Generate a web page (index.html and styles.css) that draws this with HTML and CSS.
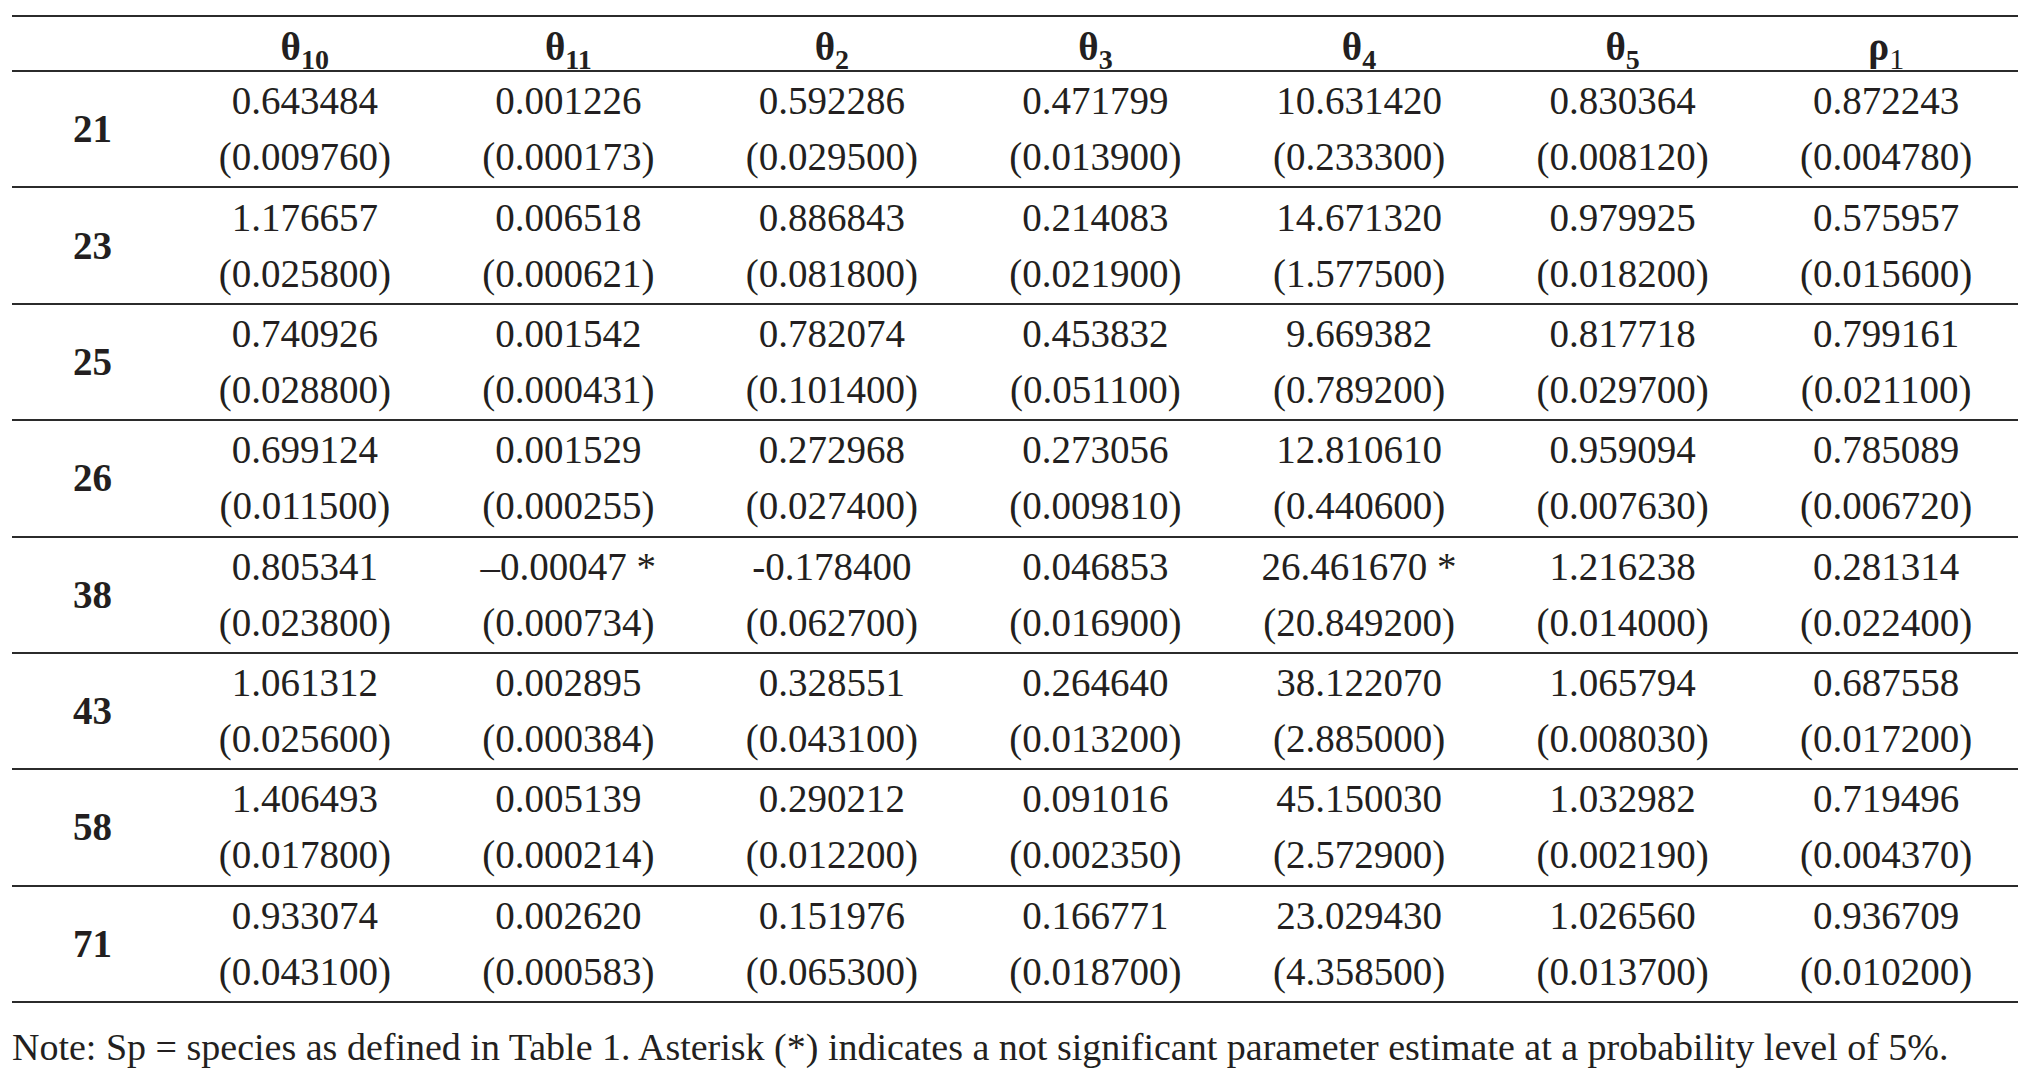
FILE: index.html
```html
<!DOCTYPE html>
<html lang="en">
<head>
<meta charset="utf-8">
<title>Parameter estimates</title>
<link rel="stylesheet" href="styles.css">
</head>
<body>
<div class="page">
  <table class="params">
    <colgroup>
      <col class="c-sp">
      <col class="c-val"><col class="c-val"><col class="c-val"><col class="c-val">
      <col class="c-val"><col class="c-val"><col class="c-val">
    </colgroup>
    <thead>
      <tr>
        <th></th>
        <th>θ<sub>10</sub></th>
        <th>θ<sub>11</sub></th>
        <th>θ<sub>2</sub></th>
        <th>θ<sub>3</sub></th>
        <th>θ<sub>4</sub></th>
        <th>θ<sub>5</sub></th>
        <th>ρ<sub class="rho">1</sub></th>
      </tr>
    </thead>
    <tbody>
      <tr>
        <th class="sp">21</th>
        <td>0.643484<br>(0.009760)</td>
        <td>0.001226<br>(0.000173)</td>
        <td>0.592286<br>(0.029500)</td>
        <td>0.471799<br>(0.013900)</td>
        <td>10.631420<br>(0.233300)</td>
        <td>0.830364<br>(0.008120)</td>
        <td>0.872243<br>(0.004780)</td>
      </tr>
      <tr>
        <th class="sp">23</th>
        <td>1.176657<br>(0.025800)</td>
        <td>0.006518<br>(0.000621)</td>
        <td>0.886843<br>(0.081800)</td>
        <td>0.214083<br>(0.021900)</td>
        <td>14.671320<br>(1.577500)</td>
        <td>0.979925<br>(0.018200)</td>
        <td>0.575957<br>(0.015600)</td>
      </tr>
      <tr>
        <th class="sp">25</th>
        <td>0.740926<br>(0.028800)</td>
        <td>0.001542<br>(0.000431)</td>
        <td>0.782074<br>(0.101400)</td>
        <td>0.453832<br>(0.051100)</td>
        <td>9.669382<br>(0.789200)</td>
        <td>0.817718<br>(0.029700)</td>
        <td>0.799161<br>(0.021100)</td>
      </tr>
      <tr>
        <th class="sp">26</th>
        <td>0.699124<br>(0.011500)</td>
        <td>0.001529<br>(0.000255)</td>
        <td>0.272968<br>(0.027400)</td>
        <td>0.273056<br>(0.009810)</td>
        <td>12.810610<br>(0.440600)</td>
        <td>0.959094<br>(0.007630)</td>
        <td>0.785089<br>(0.006720)</td>
      </tr>
      <tr>
        <th class="sp">38</th>
        <td>0.805341<br>(0.023800)</td>
        <td>–0.00047 *<br>(0.000734)</td>
        <td>-0.178400<br>(0.062700)</td>
        <td>0.046853<br>(0.016900)</td>
        <td>26.461670 *<br>(20.849200)</td>
        <td>1.216238<br>(0.014000)</td>
        <td>0.281314<br>(0.022400)</td>
      </tr>
      <tr>
        <th class="sp">43</th>
        <td>1.061312<br>(0.025600)</td>
        <td>0.002895<br>(0.000384)</td>
        <td>0.328551<br>(0.043100)</td>
        <td>0.264640<br>(0.013200)</td>
        <td>38.122070<br>(2.885000)</td>
        <td>1.065794<br>(0.008030)</td>
        <td>0.687558<br>(0.017200)</td>
      </tr>
      <tr>
        <th class="sp">58</th>
        <td>1.406493<br>(0.017800)</td>
        <td>0.005139<br>(0.000214)</td>
        <td>0.290212<br>(0.012200)</td>
        <td>0.091016<br>(0.002350)</td>
        <td>45.150030<br>(2.572900)</td>
        <td>1.032982<br>(0.002190)</td>
        <td>0.719496<br>(0.004370)</td>
      </tr>
      <tr>
        <th class="sp">71</th>
        <td>0.933074<br>(0.043100)</td>
        <td>0.002620<br>(0.000583)</td>
        <td>0.151976<br>(0.065300)</td>
        <td>0.166771<br>(0.018700)</td>
        <td>23.029430<br>(4.358500)</td>
        <td>1.026560<br>(0.013700)</td>
        <td>0.936709<br>(0.010200)</td>
      </tr>
    </tbody>
  </table>
  <p class="note">Note: Sp = species as defined in Table 1. Asterisk (*) indicates a not significant parameter estimate at a probability level of 5%.</p>
</div>
</body>
</html>
```

FILE: styles.css
```css
html, body {
  margin: 0;
  padding: 0;
  background: #ffffff;
}

body {
  font-family: "Liberation Serif", "Times New Roman", serif;
  color: #231f20;
}

.page {
  padding: 15px 0 0 12px;
}

.params {
  width: 2006px;
  table-layout: fixed;
  border-collapse: separate;
  border-spacing: 0;
  font-size: 39px;
}

.c-sp {
  width: 161px;
}

.c-val {
  width: 263.57px;
}

.params thead th {
  border-top: 2px solid #2b2b2b;
  border-bottom: 2px solid #2b2b2b;
  padding: 7px 0 1px;
  line-height: 45px;
  font-weight: bold;
  text-align: center;
}

.params sub {
  font-size: 28px;
  line-height: 0;
  vertical-align: -9px;
}

.params sub.rho {
  font-weight: normal;
  font-size: 30px;
}

.params tbody td,
.params tbody th {
  border-bottom: 2px solid #2b2b2b;
  padding: 1.2px 0;
  line-height: 56px;
  text-align: center;
  vertical-align: middle;
  white-space: nowrap;
}

.params tbody th.sp {
  font-weight: bold;
}

.params tbody td {
  font-weight: normal;
}

.note {
  margin: 22px 0 0;
  font-size: 38px;
  line-height: 44px;
}
```
